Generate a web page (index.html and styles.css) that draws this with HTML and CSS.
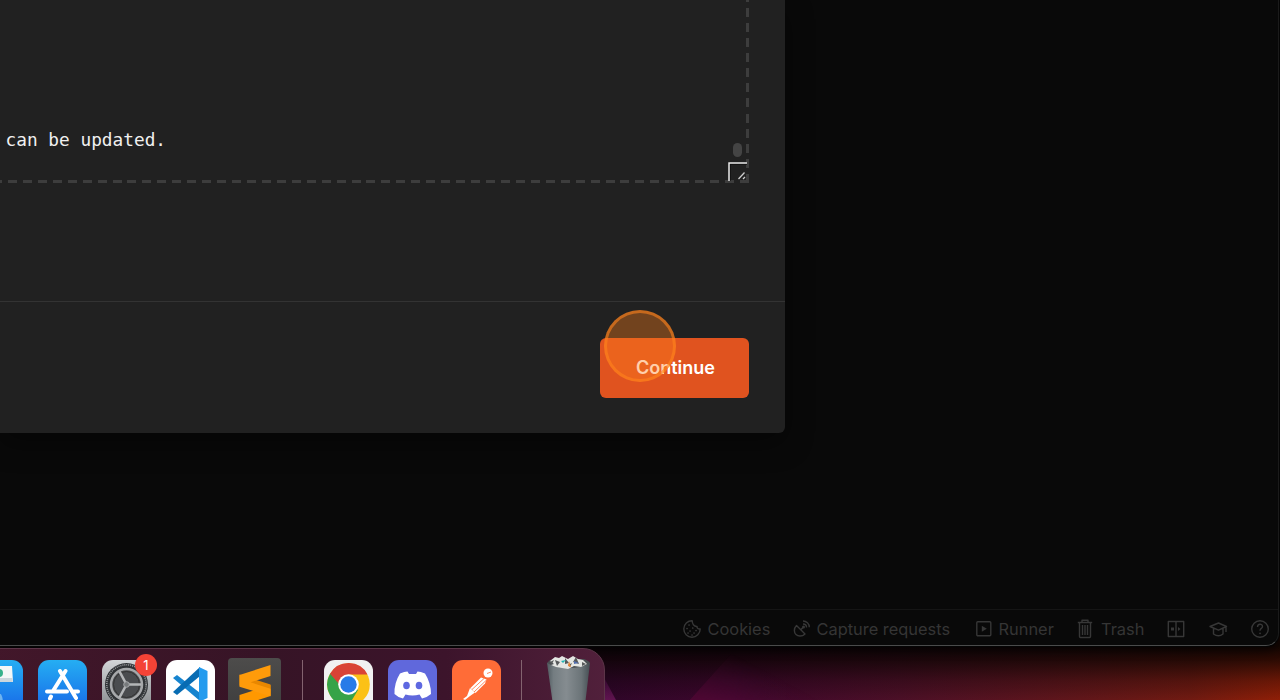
FILE: index.html
```html
<!DOCTYPE html>
<html lang="en">
<head>
<meta charset="utf-8">
<title>Import</title>
<link rel="stylesheet" href="styles.css">
</head>
<body>
<main class="desktop">
  <svg class="rays" viewBox="0 0 1280 60" width="1280" height="60">
    <defs>
      <linearGradient id="ray" gradientUnits="userSpaceOnUse" x1="705" y1="58" x2="730" y2="10"><stop offset="0" stop-color="#7a0845" stop-opacity=".3"/><stop offset="1" stop-color="#60104c" stop-opacity="0"/></linearGradient>
      <linearGradient id="fade" x1="0" y1="0" x2="1" y2="0"><stop offset="0" stop-color="#fff"/><stop offset=".3" stop-color="#fff"/><stop offset="1" stop-color="#000"/></linearGradient>
      <mask id="rayMask"><rect x="688" width="150" height="60" fill="url(#fade)"/></mask>
      <linearGradient id="ray2" x1="0" y1="0" x2="0" y2="1"><stop offset="0" stop-color="#791b72" stop-opacity="0"/><stop offset="1" stop-color="#791b62" stop-opacity=".7"/></linearGradient>
    </defs>
    <path d="M688 60 742 0h96v60z" fill="url(#ray)" mask="url(#rayMask)"/>
    <path d="M600 28 617 60H600z" fill="url(#ray2)"/>
  </svg>
  <section class="window">
    <div class="workspace"></div>
    <footer class="statusbar">
      <div class="status-item"><svg class="ic" width="20" height="20" viewBox="0 0 20 20"><path d="M10.2 1.8A8.2 8.2 0 1 0 18.2 10c-2 .3-3.2-.8-3.2-2.6-2.7.3-4.800-2-4.800-5.600z"/><path class="dots" d="M7 6h.1M10.700 9h.1M5 9.500h.1M8 12h.1M12 14h.1M6 14h.1M14 11.500h.1M10 16h.1"/></svg><span>Cookies</span></div>
      <div class="status-item capture"><svg class="ic" width="18" height="20" viewBox="0 0 18 20"><path d="M3.500 6.500C.5 9.500 1 13.500 3 15.500s6 2.300 9-.5zM7.500 11l3-3M10 5c2 0 3.500 1.300 3.500 3.500M10 2c3.500 0 6.300 2.700 6.300 6.300"/><circle cx="10.500" cy="8" r=".8"/></svg><span>Capture requests</span></div>
      <div class="status-item runner"><svg class="ic" width="18" height="20" viewBox="0 0 18 20"><rect x="1.800" y="2.800" width="14" height="14" rx="1"/><path class="solid" d="m6.800 6.800 5 3-5 3z"/></svg><span>Runner</span></div>
      <div class="status-item trash"><svg class="ic" width="16" height="20" viewBox="0 0 16 20"><path d="M.8 3.500h14.400M5 3V1.300h6V3M2.500 3.500v14q0 1 1 1h9q1 0 1-1v-14M5.500 6v10M8 6v10M10.500 6v10"/></svg><span>Trash</span></div>
      <svg class="ic panes" width="18" height="20" viewBox="0 0 18 20"><path d="M1.300 2.500h15.400v15H1.300zM9 2.500v15"/><path class="solid" d="M4 8.500h3v3H4zM11 8l2.500 2L11 12z"/></svg>
      <svg class="ic cap" width="19" height="20" viewBox="0 0 19 20"><path d="M1 7.500 9.500 4l8 3.500-8 3.700zM4.500 9.500V15q5 3.600 9.500 0V9.500M17 7.500V13"/></svg>
      <svg class="ic help" width="20" height="20" viewBox="0 0 20 20"><circle cx="10" cy="10" r="8.300"/><path d="M7.500 8c0-3.500 5-3.500 5-.5 0 2-2.500 1.800-2.500 4.200"/><path class="dots" d="M10 14.300h.1"/></svg>
    </footer>
    <div class="modal">
      <div class="modal-body">
        <div class="editor">
          <pre class="code">can be updated.</pre>
          <span class="scroll-thumb"></span>
          <svg class="resizer" width="19" height="19" viewBox="0 0 19 19"><path d="M1.200 19V1.200H19" fill="none" stroke="#111" stroke-width="3"/><path d="M1 19V1h18" fill="none" stroke="#eee" stroke-width="1.500"/><path d="m10.500 17 6-6.500M15 17l2-2" stroke="#ccc" stroke-width="1.300"/></svg>
        </div>
      </div>
      <div class="modal-footer"><button class="continue">Continue</button><span class="click-ring"></span></div>
    </div>
  </section>
  <nav class="dock">
    <svg class="app finder" width="49" height="50" viewBox="0 0 49 50"><defs><linearGradient id="blue" x1="0" y1="0" x2="0" y2="1"><stop stop-color="#25aef3"/><stop offset="1" stop-color="#1769e8"/></linearGradient></defs><rect width="49" height="50" rx="11" fill="url(#blue)"/><path d="M18 6h20l1 16H18z" fill="#f4f7f7"/><path d="M18 18h20.500l.3 4H18z" fill="#ccd7dd"/><circle cx="25" cy="13" r="4" fill="#37b28c"/><path d="M22 33q8-3 7 17h-7z" fill="#6fb4ef"/></svg>
    <svg class="app" width="49" height="50" viewBox="0 0 49 50"><rect width="49" height="50" rx="11" fill="url(#blue)"/><g stroke="#fff" stroke-width="4" stroke-linecap="round"><path d="M27.500 11 15 31M22 11l16 27M9 31.500h20M35 31.500h5M13 36.500l-1 2"/></g></svg>
    <div class="app-slot"><svg class="app" width="49" height="50" viewBox="0 0 49 50"><defs><linearGradient id="metal" x1="0" y1="0" x2="0" y2="1"><stop stop-color="#d3d6d8"/><stop offset="1" stop-color="#85888b"/></linearGradient></defs><rect width="49" height="50" rx="11" fill="url(#metal)"/><circle cx="24.500" cy="24.500" r="21.500" fill="#303336"/><circle cx="24.500" cy="24.500" r="19.700" fill="none" stroke="#96999b" stroke-width="1.600" stroke-dasharray="1 1"/><circle cx="24.500" cy="24.500" r="15.500" fill="#4a4c4f" stroke="#a6a8aa" stroke-width="2.500"/><circle cx="24.500" cy="24.500" r="13" fill="none" stroke="#333" stroke-width="1"/><path d="m24.500 24.500-7-13M24.500 24.500H39M24.500 24.500l-7 13" stroke="#b4b6b8" stroke-width="2.600"/><circle cx="24.500" cy="24.500" r="2.800" fill="#777a7c" stroke="#a5a7a9" stroke-width="1"/></svg><span class="badge">1</span></div>
    <svg class="app" width="49" height="50" viewBox="0 0 49 50"><rect width="49" height="50" rx="11" fill="#fff"/><path d="m7 18 4-3 23 18v8z" fill="#1684cf"/><path d="m7 32 4 3L34 16V7z" fill="#086cb3"/><path d="m33 7 8.500 4v27L33 42z" fill="#249bee"/></svg>
    <svg class="app sublime" width="54" height="52" viewBox="0 0 54 52"><defs><linearGradient id="dark" x1="0" y1="0" x2="0" y2="1"><stop stop-color="#4d4c4b"/><stop offset="1" stop-color="#3d3d3d"/></linearGradient></defs><rect width="53" height="55" rx="4" fill="url(#dark)"/><path d="m11.500 37 31-10v11l-31 10z" fill="#ff9800"/><path d="M11.500 16.500v11l31 10v-11z" fill="#e88700"/><path d="m11.500 17 31-10v11l-20 6.300 20 6.500v7.500l-31-9.500z" fill="#ff9b0a"/></svg>
    <span class="divider"></span>
    <svg class="app" width="49" height="50" viewBox="0 0 49 50"><rect width="49" height="50" rx="11" fill="#f1f1f1"/><circle cx="24.500" cy="24.500" r="21.300" fill="#fbc116"/><path d="M24.500 24.500 6.050 13.850A21.300 21.300 0 0 0 24.500 45.800L34 30z" fill="#36a348"/><path d="M24.500 24.500 6.050 13.850A21.300 21.300 0 0 1 43.500 14.500H24.500L15 30z" fill="#d94336"/><path d="M6.050 13.850 15.500 30 24.500 24.500 20 14z" fill="#36a348"/><path d="M6.050 13.850 15 24 24.500 14.500V7z" fill="#d94336"/><circle cx="24.500" cy="24.500" r="10.300" fill="#fff"/><circle cx="24.500" cy="24.500" r="8.200" fill="#287be8"/></svg>
    <svg class="app" width="49" height="50" viewBox="0 0 49 50"><rect width="49" height="50" rx="11" fill="#6068dc"/><path d="M12 13.500q4.500-2 7.500-2l1.500 2.500h7l1.500-2.500q3 0 7.500 2Q43 23 43 34q-4 3.500-9 4.500l-2.500-4q-7 2-14 0l-2.500 4Q10 37.500 6.500 34 6 23 12 13.500z" fill="#fff"/><ellipse cx="18.500" cy="25.500" rx="3.300" ry="3.800" fill="#5e68e1"/><ellipse cx="31" cy="25.500" rx="3.300" ry="3.800" fill="#5e68e1"/></svg>
    <svg class="app" width="49" height="50" viewBox="0 0 49 50"><rect width="49" height="50" rx="11" fill="#ff6c37"/><circle cx="36" cy="13" r="4.500" fill="#fff"/><path d="m29 17.500 5.500 2-1.500 4-9.500 9.500-5-5z" fill="#fff"/><path d="m18 28-3 8-4 3 2 1 5-4 5-3.500z" fill="#fff"/><path d="m32 18.500-12 11M34 20.500 22 32M35 13.500l4-1.500" stroke="#ff6c37" stroke-width=".8"/></svg>
    <span class="divider"></span>
    <svg class="bin" width="45" height="50" viewBox="0 0 45 50"><defs><linearGradient id="can"><stop stop-color="#505a5f"/><stop offset=".15" stop-color="#747d81"/><stop offset=".45" stop-color="#858c90"/><stop offset=".8" stop-color="#6b7478"/><stop offset="1" stop-color="#454e53"/></linearGradient></defs><path d="M1 8h43l-5 42H7z" fill="url(#can)"/><path d="M1 8q2-3 6-4l31 0q5 2 6 4-8 5-21.500 5T1 8z" fill="#4a4f52"/><path d="m4 6 5-4 4 1 3-2 6 3 5-3 5 3 5 1 4 4-6 3-7-1-6 3-6-1-6-1-5-2 3-1z" fill="#e4e6e3"/><path d="m9 5 5 2-3 4zM19 3l4 5-4 1zM30 2l3 7-6-2zM36 7l4 2-4 2zM4 7l4-2-2 4zM22 10l4-2-2 4z" fill="#56595a"/><path d="m15 6 5-1-3 3z" fill="#20b6b5"/><path d="m23 6 2 6-3-1z" fill="#e98634"/><path d="m28 6 5 2-5 1z" fill="#536fb0"/></svg>
  </nav>
</main>
</body>
</html>
```
FILE: styles.css
```css
* { box-sizing: border-box; }
body { margin: 0; font-family: Inter, "Liberation Sans", sans-serif; }
.desktop {
  position: relative;
  width: 1280px;
  height: 700px;
  overflow: hidden;
  background:
    linear-gradient(to bottom, rgba(5,3,2,.9) 646px, rgba(10,4,2,.73) 661px, rgba(8,3,3,.3) 681px, rgba(5,2,5,.03) 700px),
    linear-gradient(to right, #30062a 600px, #3f072d 740px, #4e1028 900px, #64171b 1080px, #741b12 1190px, #942007 1280px);
}
.rays { position: absolute; left: 0; top: 642px; }
.window {
  position: relative;
  display: flex;
  flex-direction: column;
  width: 1279px;
  height: 646px;
  background: #090909;
  border-bottom: 1px solid #4a4b4b;
  border-right: 1px solid #1b1b1b;
  border-bottom-right-radius: 13px;
  box-shadow: 0 0 0 1px #050505, 0 4px 10px rgba(0,0,0,.6);
}
.workspace { flex: 1; }
.statusbar {
  display: flex;
  align-items: center;
  height: 36px;
  padding: 3px 8px 0 0;
  justify-content: flex-end;
  border-top: 1px solid #151515;
  color: #353535;
  font-size: 16.400px;
  line-height: 20px;
}
.status-item { display: flex; align-items: center; gap: 6px; width: 111px; white-space: nowrap; }
.capture { width: 182px; }
.runner { width: 102.500px; }
.trash { width: 90px; gap: 8px; }
.ic { flex: none; fill: none; stroke: #373737; stroke-width: 1.4; stroke-linejoin: round; }
.ic .solid { fill: #373737; stroke: none; }
.ic .dots { stroke-width: 1.7; stroke-linecap: round; }
.cap { margin-left: 24px; }
.help { margin-left: 22px; }
.modal {
  position: absolute;
  left: 0;
  top: 0;
  width: 785px;
  height: 433px;
  background: #212121;
  border-bottom-right-radius: 6px;
  box-shadow: 0 10px 28px rgba(0,0,0,.4);
}
.modal-body { height: 301px; padding-right: 36px; }
.editor {
  position: relative;
  height: 183px;
  padding: 129px 0 0 5.500px;
  background:
    repeating-linear-gradient(to left, #3d3d3d 0 9px, transparent 9px 14.940px) bottom / 100% 3px no-repeat,
    repeating-linear-gradient(to top, #3d3d3d 0 9px, transparent 9px 15.100px) right / 3px 100% no-repeat;
}
.code { margin: 0; color: #f0f0f0; font: 17.800px/22px "DejaVu Sans Mono", monospace; }
.scroll-thumb { position: absolute; right: 7px; top: 143px; width: 9px; height: 14px; border-radius: 5px; background: #444; }
.resizer { position: absolute; right: 2px; top: 162px; }
.modal-footer {
  position: relative;
  display: flex;
  justify-content: flex-end;
  align-items: flex-start;
  height: 132px;
  padding: 36px 36px 0;
  border-top: 1px solid #333;
}
.continue {
  width: 149px;
  height: 60px;
  padding: 0 0 0 2px;
  border: 0;
  border-radius: 6px;
  background: #e0531f;
  color: #fff;
  font: 600 18px/24px Inter, sans-serif;
}
.click-ring {
  position: absolute;
  left: 604px;
  top: 7.500px;
  width: 72px;
  height: 72px;
  border: 3px solid rgba(255,132,29,.6);
  border-radius: 50%;
  background: rgba(255,128,26,.37);
}
.dock {
  position: absolute;
  left: -31px;
  top: 648px;
  display: flex;
  align-items: flex-start;
  width: 636px;
  height: 66px;
  padding: 11px 14px 0 4px;
  gap: 15px;
  border: 1px solid #5c3548;
  border-top-right-radius: 22px;
  background: linear-gradient(to right, #43172a, #361426 48%, #3c142b 75%, #51203b);
}
.app, .bin { display: block; flex: none; }
.app-slot { position: relative; }
.badge {
  position: absolute;
  right: -6px;
  top: -6px;
  width: 22px;
  height: 22px;
  border-radius: 50%;
  background: #f44336;
  color: #fff;
  font-size: 13px;
  line-height: 22px;
  text-align: center;
}
.sublime { margin: -2px 0 0 -2px; }
.divider { flex: none; width: 1px; height: 44px; margin: 0 6px 0 5px; background: #83636f; }
.bin { margin: -5px 0 0 3px; }
```
